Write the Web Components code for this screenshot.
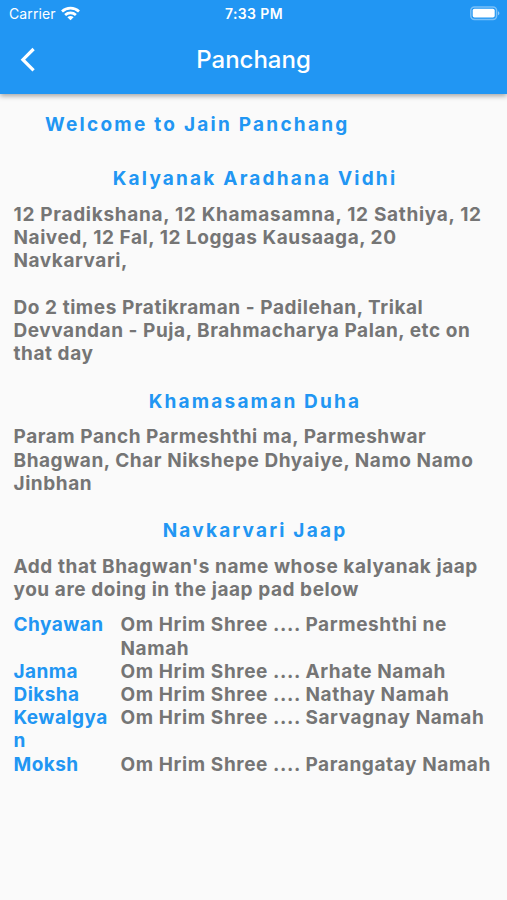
<!doctype html>
<html lang="en">
  <head>
    <meta charset="utf-8">
    <title>Panchang</title>
    <meta name="viewport" content="width=device-width, initial-scale=1.0">

    <style>
      body {
        margin: 0;
        height: 900px;
        overflow: hidden;
        background: #fafafa;
        font-family: Inter, "Liberation Sans", sans-serif;
        --blue: #2196f3;
        --grey: #757575;
      }
      .wide { letter-spacing: 0.7px; }
    </style>
  </head>

  <body>
    <template id="status-bar-template">
      <style>
        :host {
          display: grid;
          grid-template-columns: 1fr auto 1fr;
          align-items: center;
          height: 27px;
          padding: 0 7px 0 9px;
          color: #fff;
          font-size: 14px;
          line-height: 27px;
        }
        .left { display: flex; align-items: center; gap: 5px; letter-spacing: 0.1px; }
        .left slot { opacity: 0.9; }
        .time { font-weight: 600; font-size: 14px; letter-spacing: 0.4px; margin-right: 1px; }
        .battery { justify-self: end; }
        svg { display: block; }
      </style>
      <div class="left">
        <slot name="carrier"></slot>
        <svg width="19" height="15" viewBox="0 0 19 15" fill="none" stroke="#fff" stroke-width="2.7">
          <path d="M1 5.4C5.8 .9 13.2 .9 18 5.4"/>
          <path d="M4.1 8.9C7.2 6.1 11.8 6.1 14.9 8.9"/>
          <path d="M9.5 14.3L6.4 11.3C8.2 9.7 10.8 9.7 12.6 11.3Z" fill="#fff" stroke="none"/>
        </svg>
      </div>
      <div class="time"><slot name="time"></slot></div>
      <svg class="battery" width="31" height="15" viewBox="0 0 31 15">
        <rect x="1.8" y="1" width="25.8" height="12.4" rx="3.6" fill="none" stroke="#fff" stroke-opacity=".4" stroke-width="1.5"/>
        <rect x="3.7" y="2.8" width="22" height="8.8" rx="1.8" fill="#fff"/>
        <path d="M29 5.2C30.9 5.9 30.9 8.5 29 9.2Z" fill="#fff" fill-opacity=".5"/>
      </svg>
    </template>

    <template id="app-bar-template">
      <style>
        :host {
          display: block;
          height: 94px;
          background: var(--blue);
          box-shadow: 0 2px 5px rgba(0, 0, 0, 0.35);
          color: #fff;
        }
        .toolbar {
          display: grid;
          grid-template-columns: 60px 1fr 60px;
          align-items: center;
          height: 66px;
        }
        .back { display: block; margin-left: 18px; }
        h1 { margin: 0; text-align: center; font-size: 24px; font-weight: 500; line-height: 30px; }
      </style>
      <slot name="status"></slot>
      <div class="toolbar">
        <svg class="back" width="20" height="26" viewBox="0 0 20 26" fill="none" stroke="#fff" stroke-width="3.2">
          <path d="M15.6 2L4.9 12.7L15.6 23.4"/>
        </svg>
        <h1><slot></slot></h1>
      </div>
    </template>

    <template id="section-template">
      <style>
        :host { display: block; padding: 0 13.5px 24.4px; color: var(--grey); font-size: 19px; font-weight: 650; line-height: 23.25px; letter-spacing: 0.56px; }
        h2 { margin: 0 0 12.2px; padding-left: 3px; text-align: center; color: var(--blue); font-size: 19px; font-weight: 650; line-height: 23.25px; letter-spacing: 2.2px; }
        :host([lead]) { padding: 19.4px 45px 30.6px; }
        :host([lead]) h2 { margin: 0; padding: 0; text-align: left; letter-spacing: 2.25px; }
        :host([last]) { padding-bottom: 12px; }
      </style>
      <h2></h2>
      <slot></slot>
    </template>

    <template id="jaap-row-template">
      <style>
        :host { display: flex; padding: 0 13.5px; font-size: 19px; font-weight: 650; line-height: 23.2px; letter-spacing: 0.6px; }
        .name { width: 107px; flex: none; color: var(--blue); letter-spacing: 0.45px; }
        .text { color: var(--grey); white-space: nowrap; }
      </style>
      <div class="name"><slot name="name"></slot></div>
      <div class="text"><slot></slot></div>
    </template>

    <app-bar>
      <status-bar slot="status"><span slot="carrier">Carrier</span><span slot="time">7:33 PM</span></status-bar>
      Panchang
    </app-bar>

    <text-section lead heading="Welcome to Jain Panchang"></text-section>

    <text-section heading="Kalyanak Aradhana Vidhi">
      <span class="wide">12 Pradikshana, 12 Khamasamna, 12 Sathiya, 12</span><br>
      Naived, 12 Fal, 12 Loggas Kausaaga, 20<br>
      Navkarvari,<br><br>
      Do 2 times Pratikraman - Padilehan, Trikal<br>
      Devvandan - Puja, Brahmacharya Palan, etc on<br>
      that day
    </text-section>

    <text-section heading="Khamasaman Duha">
      Param Panch Parmeshthi ma, Parmeshwar<br>
      Bhagwan, Char Nikshepe Dhyaiye, Namo Namo<br>
      Jinbhan
    </text-section>

    <text-section last heading="Navkarvari Jaap">
      Add that Bhagwan's name whose kalyanak jaap<br>
      you are doing in the jaap pad below
    </text-section>

    <jaap-row><span slot="name">Chyawan</span>Om Hrim Shree .... Parmeshthi ne<br>Namah</jaap-row>
    <jaap-row><span slot="name">Janma</span>Om Hrim Shree .... Arhate Namah</jaap-row>
    <jaap-row><span slot="name">Diksha</span>Om Hrim Shree .... Nathay Namah</jaap-row>
    <jaap-row><span slot="name">Kewalgya<br>n</span>Om Hrim Shree .... Sarvagnay Namah</jaap-row>
    <jaap-row><span slot="name">Moksh</span>Om Hrim Shree .... Parangatay Namah</jaap-row>

    <script>
      // attaches a copy of the template to the element
      function attach(el, id) {
        const root = el.attachShadow({mode: 'open'});
        root.appendChild(document.getElementById(id).content.cloneNode(true));
        return root;
      }

      class StatusBar extends HTMLElement {
        constructor() {
          super();
          attach(this, 'status-bar-template');
        }
      }

      class AppBar extends HTMLElement {
        constructor() {
          super();
          attach(this, 'app-bar-template');
        }
      }

      class TextSection extends HTMLElement {
        constructor() {
          super();
          attach(this, 'section-template');
        }

        connectedCallback() {
          this.shadowRoot.querySelector('h2').textContent = this.getAttribute('heading');
        }
      }

      class JaapRow extends HTMLElement {
        constructor() {
          super();
          attach(this, 'jaap-row-template');
        }
      }

      customElements.define('status-bar', StatusBar);
      customElements.define('app-bar', AppBar);
      customElements.define('text-section', TextSection);
      customElements.define('jaap-row', JaapRow);
    </script>
  </body>
</html>
